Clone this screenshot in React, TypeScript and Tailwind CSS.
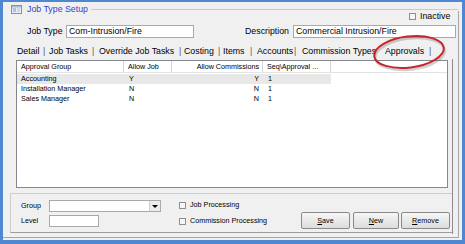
import React from "react";

const F = "font-['Liberation_Sans',Arial,sans-serif]";

function Check() {
  return <div className="w-[7px] h-[7px] border border-[#8e8f8f] bg-[#f6f6f6] shrink-0" />;
}

function Btn({ label, w }: { label: string; w: string }) {
  return (
    <div
      className={`${w} h-[17px] border border-[#8a8a8a] rounded-[2px] bg-gradient-to-b from-[#f6f6f6] to-[#dddddd] flex items-center justify-center text-[7.2px]`}
    >
      <span>
        <span className="underline">{label[0]}</span>
        {label.slice(1)}
      </span>
    </div>
  );
}

const tabs: { label: string; w: string; sep: string | null }[] = [
  { label: "Detail", w: "w-[26px]", sep: "w-[6px]" },
  { label: "Job Tasks", w: "w-[43px]", sep: "w-[7px]" },
  { label: "Override Job Tasks", w: "w-[80px]", sep: "w-[5px]" },
  { label: "Costing", w: "w-[34px]", sep: "w-[5px]" },
  { label: "Items", w: "w-[27px]", sep: "w-[7px]" },
  { label: "Accounts", w: "w-[37px]", sep: "w-[8px]" },
  { label: "Commission Types", w: "w-[83px]", sep: null },
  { label: "Approvals", w: "w-[44px]", sep: "w-[6px]" },
];

const rows = [
  { g: "Accounting", j: "Y", c: "Y", s: "1", sel: true },
  { g: "Installation Manager", j: "N", c: "N", s: "1", sel: false },
  { g: "Sales Manager", j: "N", c: "N", s: "1", sel: false },
];

export default function App() {
  return (
    <div className={`w-[465px] h-[244px] bg-[#4f87d0] pt-[2px] pl-[3px] pr-[3px] pb-[4px] ${F} text-black`}>
      <div className="relative w-[459px] h-[238px] bg-[#f0f0f0] flex flex-col">
        <div className="mt-[9px] w-[456px] h-[227px] border-r border-b border-[#a5a5a5] flex flex-col">
          {/* title row */}
          <div className="-mt-[8px] h-[12px] flex items-center pl-[8px]">
            <svg width="11" height="9" viewBox="0 0 11 9" className="shrink-0">
              <rect x="0.5" y="0.5" width="10" height="8" fill="#e6edf7" stroke="#7f93b3" />
              <rect x="1" y="1" width="9" height="1.5" fill="#a9bad3" />
              <line x1="2" y1="4" x2="5" y2="4" stroke="#8497b5" />
              <line x1="2" y1="6" x2="5" y2="6" stroke="#8497b5" />
              <line x1="6" y1="4" x2="9" y2="4" stroke="#b8c5d8" />
              <line x1="6" y1="6" x2="9" y2="6" stroke="#b8c5d8" />
            </svg>
            <span className="ml-[5px] text-[8.8px] text-[#3b3bd0] leading-none whitespace-nowrap">Job Type Setup</span>
            <div className="ml-[3px] flex-1 h-px bg-[#c9c9c9]" />
          </div>
          {/* inactive */}
          <div className="-mt-[3px] h-[9px] flex items-center pl-[406px]">
            <Check />
            <span className="ml-[4px] text-[8.8px] leading-none">Inactive</span>
          </div>
          {/* job type row */}
          <div className="mt-[4px] h-[13px] flex items-center text-[8.8px]">
            <span className="ml-[24px] w-[39px] leading-none">Job Type</span>
            <div className="w-[128px] h-[13px] border border-[#a9a9a9] bg-white flex items-center pl-[2px] leading-none">
              Com-Intrusion/Fire
            </div>
            <span className="w-[99px] pr-[4px] text-right leading-none">Description</span>
            <div className="w-[163px] h-[13px] border border-[#a9a9a9] bg-white flex items-center pl-[2px] leading-none">
              Commercial Intrusion/Fire
            </div>
          </div>
          {/* tabs */}
          <div className="mt-[6px] h-[15px] flex items-center pl-[14px] text-[8.8px] leading-none whitespace-nowrap">
            {tabs.map((t) => (
              <React.Fragment key={t.label}>
                <span className={t.w}>{t.label}</span>
                {t.sep && <span className={`${t.sep} text-[#555]`}>|</span>}
              </React.Fragment>
            ))}
          </div>
          {/* tab panel */}
          <div className="ml-[7px] w-[443px] h-[175px] border-r border-[#8c8c8c] flex flex-col">
            {/* list view */}
            <div className="mt-[1px] ml-[6px] w-[432px] h-[128px] border border-[#828790] bg-white flex flex-col text-[7.2px] leading-none">
              <div className="h-[12px] flex border-b border-[#e3e3e3]">
                <div className="w-[107px] border-r border-[#d5d5d5] flex items-center pl-[4px]">Approval Group</div>
                <div className="w-[48px] border-r border-[#d5d5d5] flex items-center pl-[4px]">Allow Job</div>
                <div className="w-[91px] border-r border-[#d5d5d5] flex items-center justify-end pr-[3px]">Allow Commissions</div>
                <div className="w-[68px] border-r border-[#d5d5d5] flex items-center pl-[4px]">Seq\Approval ...</div>
              </div>
              <div className="mt-[1px] flex flex-col">
                {rows.map((r) => (
                  <div key={r.g} className={`h-[10px] w-[314px] flex items-center ${r.sel ? "bg-[#e8e8e8]" : ""}`}>
                    <div className="w-[107px] pl-[4px]">{r.g}</div>
                    <div className="w-[48px] pl-[5px]">{r.j}</div>
                    <div className="w-[91px] text-right pr-[4px]">{r.c}</div>
                    <div className="w-[68px] pl-[5px]">{r.s}</div>
                  </div>
                ))}
              </div>
            </div>
            {/* bottom panel */}
            <div className="mt-[5px] w-[442px] h-[40px] border-t border-l border-b border-t-[#cdcdcd] border-l-[#cdcdcd] border-b-[#9c9c9c] flex text-[7.2px] leading-none">
              <div className="pl-[10px] pt-[6px] flex flex-col gap-[3px]">
                <div className="h-[12px] flex items-center">
                  <span className="w-[28px]">Group</span>
                  <div className="w-[112px] h-[12px] border border-[#a9a9a9] bg-white flex justify-end">
                    <div className="w-[11px] h-full border-l border-[#d0d0d0] bg-[#ececec] flex items-center justify-center">
                      <div className="w-0 h-0 border-l-[3px] border-r-[3px] border-t-[3px] border-l-transparent border-r-transparent border-t-black" />
                    </div>
                  </div>
                </div>
                <div className="h-[12px] flex items-center">
                  <span className="w-[28px]">Level</span>
                  <div className="w-[50px] h-[12px] border border-[#a9a9a9] bg-white" />
                </div>
              </div>
              <div className="ml-[18px] pt-[5px] flex flex-col gap-[4px]">
                <div className="h-[12px] flex items-center">
                  <Check />
                  <span className="ml-[4px]">Job Processing</span>
                </div>
                <div className="h-[12px] flex items-center">
                  <Check />
                  <span className="ml-[4px]">Commission Processing</span>
                </div>
              </div>
              <div className="ml-auto self-end mb-[3px] mr-[2px] flex">
                <Btn label="Save" w="w-[49px]" />
                <div className="ml-[3px]">
                  <Btn label="New" w="w-[46px]" />
                </div>
                <div className="ml-[2px]">
                  <Btn label="Remove" w="w-[49px]" />
                </div>
              </div>
            </div>
          </div>
        </div>
        {/* red annotation ellipse */}
        <svg className="absolute left-[366px] top-[29px]" width="82" height="44" viewBox="0 0 82 44">
          <ellipse cx="41" cy="23" rx="35" ry="15.5" fill="none" stroke="#777" strokeOpacity="0.35" strokeWidth="2.5" transform="rotate(-7 41 23)" />
          <ellipse cx="40" cy="21" rx="35" ry="15.5" fill="none" stroke="#c6252c" strokeWidth="2" transform="rotate(-7 40 21)" />
        </svg>
      </div>
    </div>
  );
}
